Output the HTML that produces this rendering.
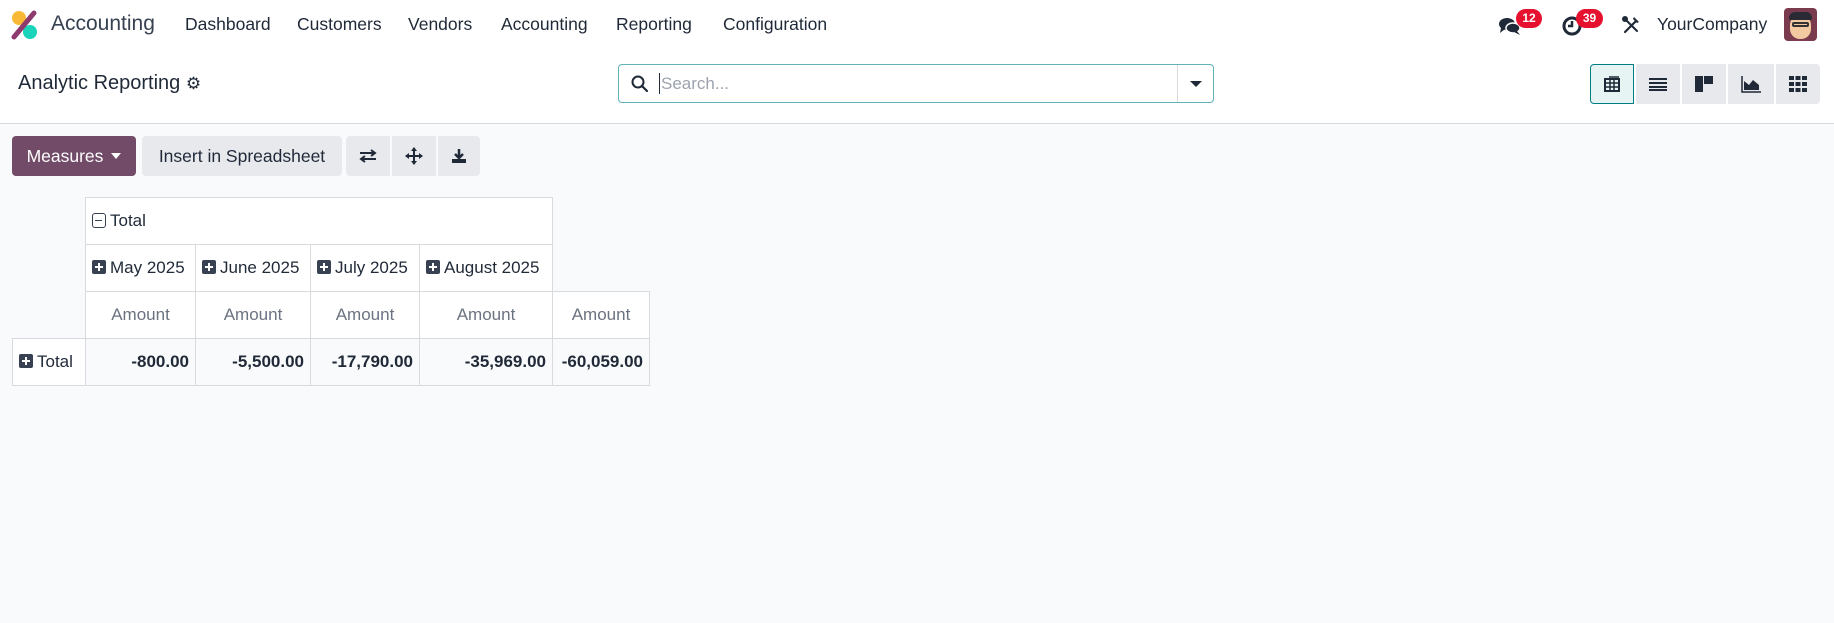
<!DOCTYPE html>
<html><head><meta charset="utf-8"><style>
*{box-sizing:border-box;margin:0;padding:0}
body{width:1834px;height:623px;background:#f9fafb;font-family:"Liberation Sans",sans-serif;color:#374151;position:relative;overflow:hidden}
.abs{position:absolute}
.nav{position:absolute;left:0;top:0;width:1834px;height:50px;background:#fff}
.nav .m{position:absolute;top:14px;font-size:17.5px;color:#1f2937}
.cp{position:absolute;left:0;top:50px;width:1834px;height:74px;background:#fff;border-bottom:1px solid #d8dadd}
.btn{position:absolute;top:136px;height:40px;border-radius:4px;background:#e7e9ed;font-size:17.5px;color:#1f2937;display:flex;align-items:center;justify-content:center}
.vs{position:absolute;top:64px;height:40px;width:44px;background:#e7e9ed;display:flex;align-items:center;justify-content:center}
table{position:absolute;left:12px;top:197px;border-collapse:collapse;font-size:17px;color:#1f2937}
td{border:1px solid #d8dadd;height:47px;padding:0 6px;white-space:nowrap}
.pl{display:inline-block;width:14px;height:14px;background:#374151;border-radius:2px;vertical-align:-1px;margin-right:4px;position:relative}
.pl:before{content:"";position:absolute;left:3px;top:6px;width:8px;height:2px;background:#fff}
.pl:after{content:"";position:absolute;left:6px;top:3px;width:2px;height:8px;background:#fff}
.mn{display:inline-block;width:14px;height:15px;border:1.5px solid #374151;border-radius:3px;vertical-align:-2px;margin-right:4px;position:relative}
.mn:before{content:"";position:absolute;left:2px;top:5.5px;width:7px;height:1.5px;background:#374151}
.badge{position:absolute;top:9px;height:19px;border-radius:10px;background:#e5112e;color:#fff;font-size:12px;font-weight:bold;text-align:center;line-height:19px}
</style></head><body>
<div class="nav">
<svg class="abs" style="left:10px;top:10px" width="30" height="32" viewBox="10 10 30 32"><circle cx="19" cy="18" r="7" fill="#f9b937"/><circle cx="30" cy="32" r="7" fill="#1ad3bb"/><line x1="14" y1="37" x2="34" y2="13" stroke="#8e3a6e" stroke-width="5" stroke-linecap="round"/></svg>
<div class="m" style="left:51px;top:12px;font-size:21px;color:#374151">Accounting</div>
<div class="m" style="left:185px">Dashboard</div>
<div class="m" style="left:297px">Customers</div>
<div class="m" style="left:408px">Vendors</div>
<div class="m" style="left:501px">Accounting</div>
<div class="m" style="left:616px">Reporting</div>
<div class="m" style="left:723px">Configuration</div>
<svg class="abs" style="left:1498px;top:16px" width="24" height="20" viewBox="0 0 24 20"><ellipse cx="9" cy="8" rx="8" ry="6" fill="#1f2937"/><ellipse cx="15" cy="12" rx="7" ry="5" fill="#1f2937" stroke="#fff" stroke-width="1.5"/><path d="M3 12 L2 17 L7 13Z M19 15 L22 19 L16 16Z" fill="#1f2937"/></svg>
<div class="badge" style="left:1516px;width:26px">12</div>
<svg class="abs" style="left:1561px;top:15px" width="22" height="22" viewBox="0 0 22 22"><circle cx="11" cy="11" r="8" fill="none" stroke="#1f2937" stroke-width="3"/><path d="M11 6v5h-4" fill="none" stroke="#1f2937" stroke-width="2.5"/></svg>
<div class="badge" style="left:1576px;width:27px">39</div>
<svg class="abs" style="left:1621px;top:15px" width="20" height="20" viewBox="0 0 20 20"><path d="M4 17L15 6" stroke="#1f2937" stroke-width="2.2" stroke-linecap="round"/><path d="M13 2l5 5-2 1-4-4z" fill="#1f2937"/><path d="M3 3l13 13" stroke="#1f2937" stroke-width="2" stroke-linecap="round"/><circle cx="4" cy="4" r="3" fill="#1f2937"/></svg>
<div class="m" style="left:1657px;color:#1f2937">YourCompany</div>
<div class="abs" style="left:1784px;top:8px;width:33px;height:33px;border-radius:4px;background:#7a3b4e;overflow:hidden"><div style="position:absolute;left:6px;top:7px;width:21px;height:24px;border-radius:10px;background:#f2c9a0"></div><div style="position:absolute;left:5px;top:4px;width:23px;height:8px;border-radius:6px 6px 2px 2px;background:#2a2a35"></div><div style="position:absolute;left:8px;top:14px;width:17px;height:5px;border:2px solid #333;border-radius:2px"></div></div>
</div>
<div class="cp">
<div class="abs" style="left:18px;top:22px;font-size:20px;color:#1f2937">Analytic Reporting <span style="font-size:17px">⚙</span></div>
<div class="abs" style="left:618px;top:14px;width:596px;height:39px;border:1px solid #5fb3b8;border-radius:4px;background:#fff">
<svg class="abs" style="left:12px;top:10px" width="18" height="18" viewBox="0 0 18 18"><circle cx="7" cy="7" r="5.5" fill="none" stroke="#1f2937" stroke-width="2"/><path d="M11 11l5 5" stroke="#1f2937" stroke-width="2.2" stroke-linecap="round"/></svg>
<div class="abs" style="left:40px;top:8px;width:1px;height:21px;background:#1f2937"></div>
<div class="abs" style="left:42px;top:9px;font-size:17px;color:#9ca3af">Search...</div>
<div class="abs" style="left:558px;top:0;width:1px;height:37px;background:#d8dadd"></div>
<div class="abs" style="left:571px;top:16px;border-left:6px solid transparent;border-right:6px solid transparent;border-top:6px solid #1f2937"></div>
</div>
</div>
<div class="vs" style="left:1590px;background:#e6f4f4;border:1px solid #017e84;border-radius:4px 0 0 4px"><svg width="18" height="18" viewBox="0 0 18 18"><rect x="2" y="4" width="14" height="12" fill="none" stroke="#1f2937" stroke-width="2"/><path d="M2 8h14M2 12h14M7 4v12M11 4v12M6 2h10" stroke="#1f2937" stroke-width="1.5"/></svg></div>
<div class="vs" style="left:1636px"><svg width="18" height="14"><path d="M0 2h18M0 6h18M0 10h18M0 13h18" stroke="#1f2937" stroke-width="2"/></svg></div>
<div class="vs" style="left:1682px"><svg width="18" height="18"><rect x="0" y="1" width="8" height="16" fill="#1f2937"/><rect x="9" y="1" width="9" height="8" fill="#1f2937"/></svg></div>
<div class="vs" style="left:1728px;width:46px"><svg width="20" height="18"><path d="M1 1v16h19" fill="none" stroke="#1f2937" stroke-width="1.5"/><path d="M3 15V6l5 4 4-5 6 5v5z" fill="#1f2937"/></svg></div>
<div class="vs" style="left:1776px;border-radius:0 4px 4px 0"><svg width="18" height="16"><g fill="#1f2937"><rect x="0" y="0" width="5" height="4"/><rect x="6.5" y="0" width="5" height="4"/><rect x="13" y="0" width="5" height="4"/><rect x="0" y="6" width="5" height="4"/><rect x="6.5" y="6" width="5" height="4"/><rect x="13" y="6" width="5" height="4"/><rect x="0" y="12" width="5" height="4"/><rect x="6.5" y="12" width="5" height="4"/><rect x="13" y="12" width="5" height="4"/></g></svg></div>
<div class="btn" style="left:12px;width:124px;background:#714b67;color:#fff">Measures <span style="display:inline-block;margin-left:8px;border-left:5px solid transparent;border-right:5px solid transparent;border-top:6px solid #fff"></span></div>
<div class="btn" style="left:142px;width:200px">Insert in Spreadsheet</div>
<div class="btn" style="left:346px;width:44px;border-radius:4px 0 0 4px"><svg width="18" height="14"><path d="M1 4h15M12 1l4 3-4 3M17 10H2M6 7l-4 3 4 3" fill="none" stroke="#1f2937" stroke-width="2"/></svg></div>
<div class="btn" style="left:392px;width:44px;border-radius:0"><svg width="18" height="18"><path d="M9 1v16M1 9h16" stroke="#1f2937" stroke-width="2"/><path d="M9 0l3 4H6zM9 18l3-4H6zM0 9l4 3V6zM18 9l-4 3V6z" fill="#1f2937"/></svg></div>
<div class="btn" style="left:438px;width:42px;border-radius:0 4px 4px 0"><svg width="16" height="16"><path d="M8 1v8M4 6l4 4 4-4" fill="none" stroke="#1f2937" stroke-width="2.5"/><rect x="1" y="11" width="14" height="4" fill="#1f2937"/></svg></div>
<table>
<tr><td style="border:none;background:none;width:73px"></td><td colspan="4" style="background:#fff"><span class="mn"></span>Total</td><td style="border:none;background:none"></td></tr>
<tr><td style="border:none;background:none"></td><td style="background:#fff;width:110px"><span class="pl"></span>May 2025</td><td style="background:#fff;width:115px"><span class="pl"></span>June 2025</td><td style="background:#fff;width:109px"><span class="pl"></span>July 2025</td><td style="background:#fff;width:133px"><span class="pl"></span>August 2025</td><td style="border:none;border-bottom:1px solid #d8dadd;background:none;width:97px"></td></tr>
<tr style="color:#6b7280;text-align:center"><td style="border:none;background:none"></td><td style="background:#fff">Amount</td><td style="background:#fff">Amount</td><td style="background:#fff">Amount</td><td style="background:#fff">Amount</td><td style="background:#fff">Amount</td></tr>
<tr style="font-weight:bold;text-align:right"><td style="background:#fff;text-align:left;font-weight:normal"><span class="pl"></span>Total</td><td>-800.00</td><td>-5,500.00</td><td>-17,790.00</td><td>-35,969.00</td><td>-60,059.00</td></tr>
</table>
</body></html>
